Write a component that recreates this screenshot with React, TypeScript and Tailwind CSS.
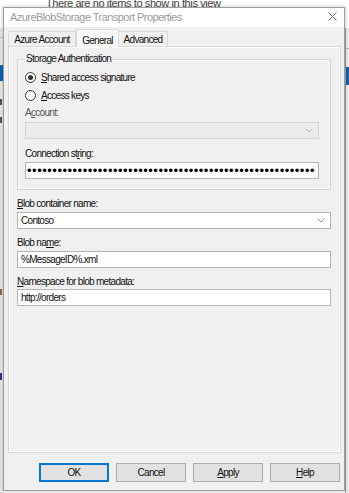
import React from 'react';

const Chevron: React.FC<{ color?: string }> = ({ color = '#8a8a8a' }) => (
  <svg width="8" height="5" viewBox="0 0 8 5" fill="none">
    <polyline points="0.5,0.5 4,4 7.5,0.5" stroke={color} strokeWidth="1" />
  </svg>
);

const Radio: React.FC<{ checked?: boolean }> = ({ checked }) => (
  <span className="flex h-[11px] w-[11px] shrink-0 items-center justify-center rounded-full border border-[#333] bg-white">
    {checked && <span className="h-[5px] w-[5px] rounded-full bg-[#333]" />}
  </span>
);

const Label: React.FC<{ children: React.ReactNode; className?: string }> = ({ children, className = '' }) => (
  <div className={`h-[12px] whitespace-nowrap leading-[12px] ${className}`}>{children}</div>
);

const TextBox: React.FC<{ value: string; className?: string }> = ({ value, className = '' }) => (
  <div className={`flex h-[17px] items-center border border-[#b4b4b4] bg-white pl-[3px] leading-none ${className}`}>
    {value}
  </div>
);

const Button: React.FC<{ children: React.ReactNode; primary?: boolean }> = ({ children, primary }) => (
  <div
    className={`flex h-[19px] w-[70px] items-center justify-center border bg-[#e1e1e1] ${
      primary ? 'border-[#0078d7] shadow-[inset_0_0_0_1px_#0078d7]' : 'border-[#adadad]'
    }`}
  >
    {children}
  </div>
);

const App: React.FC = () => {
  const dots = '•'.repeat(70);

  return (
    <div className="relative h-[493px] w-[349px] overflow-hidden bg-white font-['Liberation_Sans',Arial,sans-serif] text-[10px] tracking-[-0.7px] text-[#111]">
      {/* app behind the dialog */}
      <div className="absolute left-[46px] top-[-5px] whitespace-nowrap text-[11px] tracking-[-0.4px] text-[#444]">
        There are no items to show in this view
      </div>
      <div className="absolute left-0 top-[28px] h-[465px] w-[3px] bg-[#e9e9e9]">
        <div className="mt-[9px] h-px w-full bg-[#bdbdbd]" />
        <div className="mt-[27px] h-[16px] w-full bg-[#0a64b4]" />
        <div className="mt-[18px] h-[6px] w-[2px] bg-[#555]" />
        <div className="mt-[12px] h-[6px] w-[2px] bg-[#555]" />
        <div className="mt-[166px] h-[6px] w-[2px] bg-[#8a6a40]" />
        <div className="mt-[78px] h-[7px] w-[2px] bg-[#2a3a8a]" />
      </div>
      <div className="absolute right-0 top-[28px] h-[465px] w-[4px] border-l border-[#a0a0a0] bg-[#ececec]">
        <div className="mt-[20px] h-px w-full bg-[#b0b0b0]" />
        <div className="mt-[18px] h-[18px] w-full bg-[#0a64b4]" />
      </div>

      {/* dialog window */}
      <div className="absolute left-[3px] top-[7px] flex h-[484px] w-[342px] flex-col border border-[#9d9d9d] bg-[#f0f0f0] shadow-[0_0_4px_rgba(0,0,0,0.25)]">
        <div className="flex h-[19px] items-center justify-between bg-white pl-[6px] pr-[7px]">
          <span className="whitespace-nowrap text-[11px] tracking-[-0.55px] text-[#9a9a9a]">
            AzureBlobStorage Transport Properties
          </span>
          <svg width="9" height="9" viewBox="0 0 9 9" className="mb-[3px]">
            <path d="M0.5 0.5 L8.5 8.5 M8.5 0.5 L0.5 8.5" stroke="#777" strokeWidth="1" />
          </svg>
        </div>

        <div className="flex flex-1 flex-col pl-[4px] pr-[3px]">
          {/* tabs */}
          <div className="flex h-[19px] items-end whitespace-nowrap">
            <div className="flex h-[15px] w-[68px] items-center justify-center border border-b-0 border-[#d9d9d9] bg-[#f0f0f0] pt-[1px]">
              Azure Account
            </div>
            <div className="relative z-10 -mb-px flex h-[18px] w-[43px] items-start justify-center border border-b-0 border-[#d9d9d9] bg-[#f7f7f7] pt-[3px]">
              General
            </div>
            <div className="flex h-[15px] w-[49px] items-center justify-center border border-b-0 border-l-0 border-[#d9d9d9] bg-[#f0f0f0] pt-[1px]">
              Advanced
            </div>
          </div>

          {/* tab panel */}
          <div className="flex h-[407px] flex-col border border-[#d9d9d9] bg-[#f0f0f0] pl-[8px] pr-[9px] shadow-[inset_0_0_0_1px_#ffffff]">
            <fieldset className="mt-[6px] min-w-0 border border-[#d6d6d6] pb-[10px] pl-[7px] pr-[11px] shadow-[inset_0_0_0_1px_#fafafa]">
              <legend className="h-[12px] whitespace-nowrap px-px leading-[12px]">Storage Authentication</legend>
              <div className="mt-[3px] flex h-[18px] items-center gap-[5px]">
                <Radio checked />
                <span>
                  <u>S</u>hared access signature
                </span>
              </div>
              <div className="flex h-[18px] items-center gap-[5px]">
                <Radio />
                <span>
                  <u>A</u>ccess keys
                </span>
              </div>
              <Label className="mt-[3px] text-[#555]">
                A<u>c</u>count:
              </Label>
              <div className="mt-[3px] flex h-[17px] items-center justify-end border border-[#d4d4d4] bg-[#ebebeb] pr-[5px]">
                <Chevron color="#b5b5b5" />
              </div>
              <Label className="mt-[9px]">
                Connection st<u>r</u>ing:
              </Label>
              <div className="mt-[2px] flex h-[17px] min-w-0 items-center justify-end overflow-hidden border border-[#b4b4b4] bg-white pr-[3px]">
                <span className="shrink-0 whitespace-nowrap text-[13px] leading-none tracking-[0.5px] text-black">{dots}</span>
              </div>
            </fieldset>

            <Label className="mt-[8px]">
              <u>B</u>lob container name:
            </Label>
            <div className="mt-[2px] flex h-[17px] items-center justify-between border border-[#b4b4b4] bg-white pl-[3px] pr-[5px]">
              <span>Contoso</span>
              <Chevron />
            </div>
            <Label className="mt-[8px]">
              Blob na<u>m</u>e:
            </Label>
            <TextBox className="mt-[2px]" value="%MessageID%.xml" />
            <Label className="mt-[8px]">
              <u>N</u>amespace for blob metadata:
            </Label>
            <TextBox className="mt-[1px]" value="http://orders" />
          </div>

          {/* buttons */}
          <div className="mt-[10px] flex justify-end gap-[7px] pr-[1px]">
            <Button primary>OK</Button>
            <Button>Cancel</Button>
            <Button>
              <span>
                <u>A</u>pply
              </span>
            </Button>
            <Button>
              <span>
                <u>H</u>elp
              </span>
            </Button>
          </div>
        </div>
      </div>
    </div>
  );
};

export default App;
